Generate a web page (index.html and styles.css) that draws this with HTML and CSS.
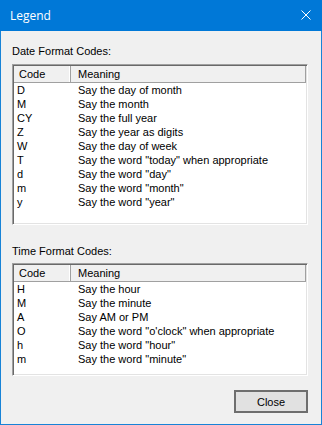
FILE: index.html
```html
<!DOCTYPE html>
<html lang="en">
<head>
    <meta charset="UTF-8">
    <title>Legend</title>
    <link rel="stylesheet" href="styles.css">
</head>
<body>

<div class="window">
    <div class="titlebar">
        <span class="title">Legend</span>
        <svg class="close-x" width="10" height="10" viewBox="0 0 10 10">
            <path d="M0.5 0.5 L9.5 9.5 M9.5 0.5 L0.5 9.5" stroke="#fff" stroke-width="1" fill="none"/>
        </svg>
    </div>

    <div class="content">
        <div class="group-label">Date Format Codes:</div>
        <div class="listview list-date">
            <div class="lv-header">
                <div class="col-code">Code</div>
                <div class="col-meaning">Meaning</div>
            </div>
            <div class="lv-row"><span class="cell-code">D</span><span class="cell-meaning">Say the day of month</span></div>
            <div class="lv-row"><span class="cell-code">M</span><span class="cell-meaning">Say the month</span></div>
            <div class="lv-row"><span class="cell-code">CY</span><span class="cell-meaning">Say the full year</span></div>
            <div class="lv-row"><span class="cell-code">Z</span><span class="cell-meaning">Say the year as digits</span></div>
            <div class="lv-row"><span class="cell-code">W</span><span class="cell-meaning">Say the day of week</span></div>
            <div class="lv-row"><span class="cell-code">T</span><span class="cell-meaning">Say the word "today" when appropriate</span></div>
            <div class="lv-row"><span class="cell-code">d</span><span class="cell-meaning">Say the word "day"</span></div>
            <div class="lv-row"><span class="cell-code">m</span><span class="cell-meaning">Say the word "month"</span></div>
            <div class="lv-row"><span class="cell-code">y</span><span class="cell-meaning">Say the word "year"</span></div>
        </div>

        <div class="group-label second">Time Format Codes:</div>
        <div class="listview list-time">
            <div class="lv-header">
                <div class="col-code">Code</div>
                <div class="col-meaning">Meaning</div>
            </div>
            <div class="lv-row"><span class="cell-code">H</span><span class="cell-meaning">Say the hour</span></div>
            <div class="lv-row"><span class="cell-code">M</span><span class="cell-meaning">Say the minute</span></div>
            <div class="lv-row"><span class="cell-code">A</span><span class="cell-meaning">Say AM or PM</span></div>
            <div class="lv-row"><span class="cell-code">O</span><span class="cell-meaning">Say the word "o'clock" when appropriate</span></div>
            <div class="lv-row"><span class="cell-code">h</span><span class="cell-meaning">Say the word "hour"</span></div>
            <div class="lv-row"><span class="cell-code">m</span><span class="cell-meaning">Say the word "minute"</span></div>
        </div>

        <div class="button-row">
            <button class="btn-close">Close</button>
        </div>
    </div>
</div>

</body>
</html>
```

FILE: styles.css
```css
body {
    margin: 0;
    padding: 0;
    font-family: 'Liberation Sans', Arial, sans-serif;
    font-size: 11px;
    color: #000;
    background-color: #f0f0f0;
}
.window {
    width: 322px;
    height: 425px;
    box-sizing: border-box;
    border: 1px solid #1883d7;
    border-top: none;
    background-color: #f0f0f0;
    display: flex;
    flex-direction: column;
}
.titlebar {
    height: 31px;
    margin: 0 -1px;
    background-color: #0078d7;
    display: flex;
    align-items: center;
    justify-content: space-between;
    padding: 0 10px 0 10px;
}
.title {
    font-family: 'Open Sans', 'Noto Sans', sans-serif;
    font-size: 12px;
    color: #fff;
    margin-top: -1px;
}
.close-x {
    display: block;
    margin-right: 1px;
    margin-top: -1px;
}
.content {
    padding: 14px 13px 0 11px;
    display: flex;
    flex-direction: column;
}
.group-label {
    height: 13px;
    line-height: 13px;
    margin-bottom: 6px;
}
.group-label.second {
    margin-top: 20px;
    margin-bottom: 5px;
}
.listview {
    background-color: #fff;
    border-top: 1px solid #a0a0a0;
    border-left: 1px solid #a0a0a0;
    border-right: 1px solid #fff;
    border-bottom: 1px solid #fff;
    box-shadow: inset 1px 1px 0 #696969, inset -1px -1px 0 #e3e3e3;
    padding: 1px;
    box-sizing: border-box;
}
.list-date {
    height: 161px;
}
.list-time {
    height: 113px;
}
.lv-header {
    display: flex;
    height: 17px;
    box-sizing: border-box;
    background-color: #f0f0f0;
    border-bottom: 1px solid #a0a0a0;
    border-right: 1px solid #a0a0a0;
    line-height: 16px;
}
.col-code {
    width: 57px;
    padding-left: 5px;
    box-sizing: border-box;
    border-right: 1px solid #a0a0a0;
    box-shadow: inset -1px 0 0 #fff;
}
.col-meaning {
    padding-left: 7px;
}
.lv-row {
    display: flex;
    height: 14px;
    line-height: 14px;
    white-space: nowrap;
}
.cell-code {
    width: 64px;
    padding-left: 3px;
    box-sizing: border-box;
}
.cell-meaning {
    padding-left: 0;
}
.button-row {
    display: flex;
    justify-content: flex-end;
    margin-top: 14px;
}
.btn-close {
    width: 74px;
    height: 23px;
    font-family: 'Liberation Sans', Arial, sans-serif;
    font-size: 11px;
    color: #000;
    background-color: #e1e1e1;
    border: 2px solid #6e6e6e;
    padding: 0;
}
```
